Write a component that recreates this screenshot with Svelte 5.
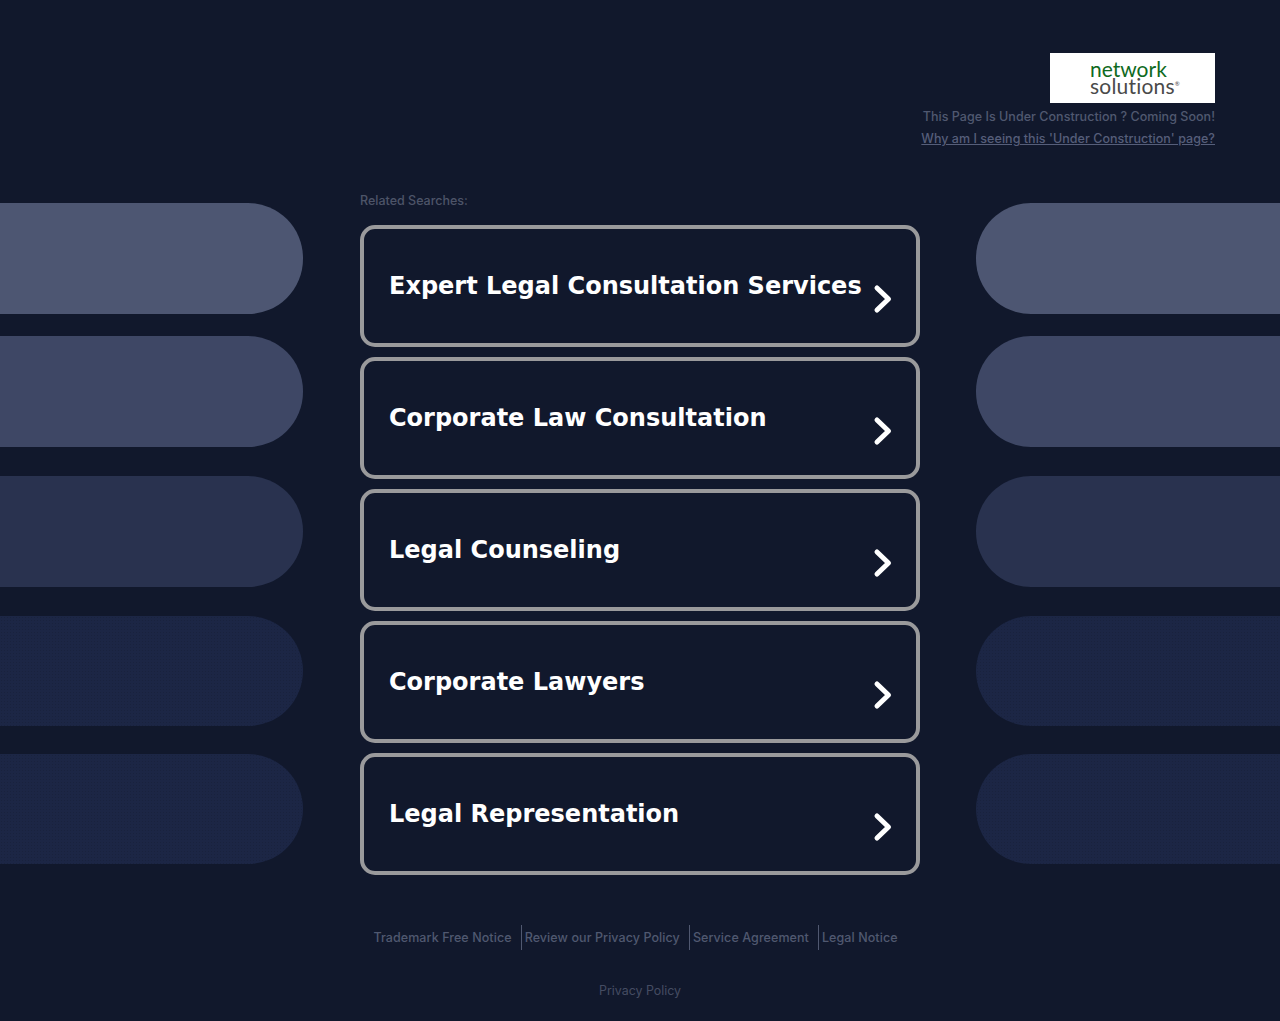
<script>
  const searches = [
    'Expert Legal Consultation Services',
    'Corporate Law Consultation',
    'Legal Counseling',
    'Corporate Lawyers',
    'Legal Representation'
  ];
  const footer = ['Trademark Free Notice', 'Review our Privacy Policy', 'Service Agreement', 'Legal Notice'];
  const pills = [1, 2, 3, 4, 5];
</script>

<div class="page">
  <header class="top">
    <div class="logo">
      <span class="net">network</span>
      <span class="sol">solutions<sup>®</sup></span>
    </div>
    <p class="line">This Page Is Under Construction ? Coming Soon!</p>
    <a class="line why" href="#why">Why am I seeing this 'Under Construction' page?</a>
  </header>

  <main class="stage">
    <div class="side left">
      {#each pills as p}<div class="pill p{p}"></div>{/each}
    </div>
    <section class="center">
      <h2 class="related">Related Searches:</h2>
      <div class="cards">
        {#each searches as s}
          <a class="card" href="#s">
            <span class="title">{s}</span>
            <svg class="chev" width="20" height="30" viewBox="0 0 20 30" aria-hidden="true">
              <path d="M4 4 L15.5 15 L4 26" fill="none" stroke="#fff" stroke-width="5" stroke-linecap="round" stroke-linejoin="round"/>
            </svg>
          </a>
        {/each}
      </div>
    </section>
    <div class="side right">
      {#each pills as p}<div class="pill p{p}"></div>{/each}
    </div>
  </main>

  <footer class="foot">
    <nav class="links">
      {#each footer as f}<a href="#f">{f}</a>{/each}
    </nav>
    <a class="privacy" href="#p">Privacy Policy</a>
  </footer>
</div>

<style>
  :global(body) {
    margin: 0;
    background: #11182c;
  }
  .page {
    height: 1021px;
    overflow: hidden;
    background: #11182c;
    font-family: Inter, "DejaVu Sans", sans-serif;
  }
  .top {
    display: flex;
    flex-direction: column;
    align-items: flex-end;
    padding: 53px 65px 0 0;
    height: 137px;
  }
  .logo {
    width: 165px;
    height: 50px;
    background: #fff;
    display: flex;
    flex-direction: column;
    justify-content: center;
    padding: 0 0 2px 40px;
    box-sizing: border-box;
    font-family: Lato, sans-serif;
    line-height: 17px;
  }
  .net {
    color: #0f6a1e;
    font-size: 21px;
  }
  .sol {
    color: #4a4a4a;
    font-size: 21px;
    letter-spacing: 0.2px;
    font-weight: 400;
  }
  .sol sup {
    font-size: 6px;
    line-height: 0;
    vertical-align: 8px;
  }
  .line {
    margin: 0;
    font-size: 12.5px;
    font-weight: 500;
    letter-spacing: 0.04px;
    line-height: 22px;
    color: #505870;
    white-space: nowrap;
  }
  p.line {
    margin-top: 3px;
  }
  .why {
    color: #565e7a;
    text-decoration: underline;
  }
  .stage {
    display: grid;
    grid-template-columns: 303px 560px 304px;
    column-gap: 57px;
  }
  .side {
    padding-top: 13px;
    display: flex;
    flex-direction: column;
  }
  .right {
    margin-left: -1px;
    width: 305px;
  }
  .pill {
    height: 110.6px;
    flex: none;
  }
  .left .pill { border-radius: 0 55px 55px 0; }
  .right .pill { border-radius: 55px 0 0 55px; }
  .p1 { background-color: #4d5672; }
  .p2 { background-color: #3e4765; margin-top: 22.4px; }
  .p3 { background-color: #29324f; margin-top: 29.4px; }
  .p4, .p5 {
    height: 110px;
    background-color: #1c2645;
    background-image: radial-gradient(rgba(17, 24, 44, 0.3) 0.7px, transparent 1px);
    background-size: 3px 3px;
  }
  .p4 { margin-top: 29.4px; }
  .p5 { margin-top: 28px; }
  .related {
    margin: 0;
    height: 35px;
    font-size: 12.5px;
    font-weight: 500;
    line-height: 21px;
    color: #4d5468;
  }
  .cards {
    display: flex;
    flex-direction: column;
    gap: 10px;
  }
  .card {
    position: relative;
    display: flex;
    align-items: center;
    height: 122px;
    box-sizing: border-box;
    border: 4px solid #9a9a9c;
    border-radius: 15px;
    padding-left: 25px;
    padding-bottom: 1px;
    text-decoration: none;
    color: #fff;
    font-family: "DejaVu Sans", sans-serif;
  }
  .title {
    font-size: 24px;
    font-weight: 700;
    white-space: nowrap;
  }
  .chev {
    position: absolute;
    right: 23px;
    top: 55px;
  }
  .foot {
    display: flex;
    flex-direction: column;
    align-items: center;
  }
  .links {
    display: flex;
    margin-top: 50px;
    margin-left: -3px;
    height: 25px;
    align-items: center;
  }
  .links a {
    font-size: 12.5px;
    font-weight: 500;
    letter-spacing: 0.08px;
    color: #505870;
    text-decoration: none;
    line-height: 25px;
    padding: 0 9px 0 3px;
    border-right: 1px solid #505870;
    white-space: nowrap;
  }
  .links a:last-child {
    border-right: 0;
  }
  .privacy {
    margin-top: 31px;
    font-size: 12.4px;
    line-height: 20px;
    color: #454c62;
    text-decoration: none;
  }
</style>
